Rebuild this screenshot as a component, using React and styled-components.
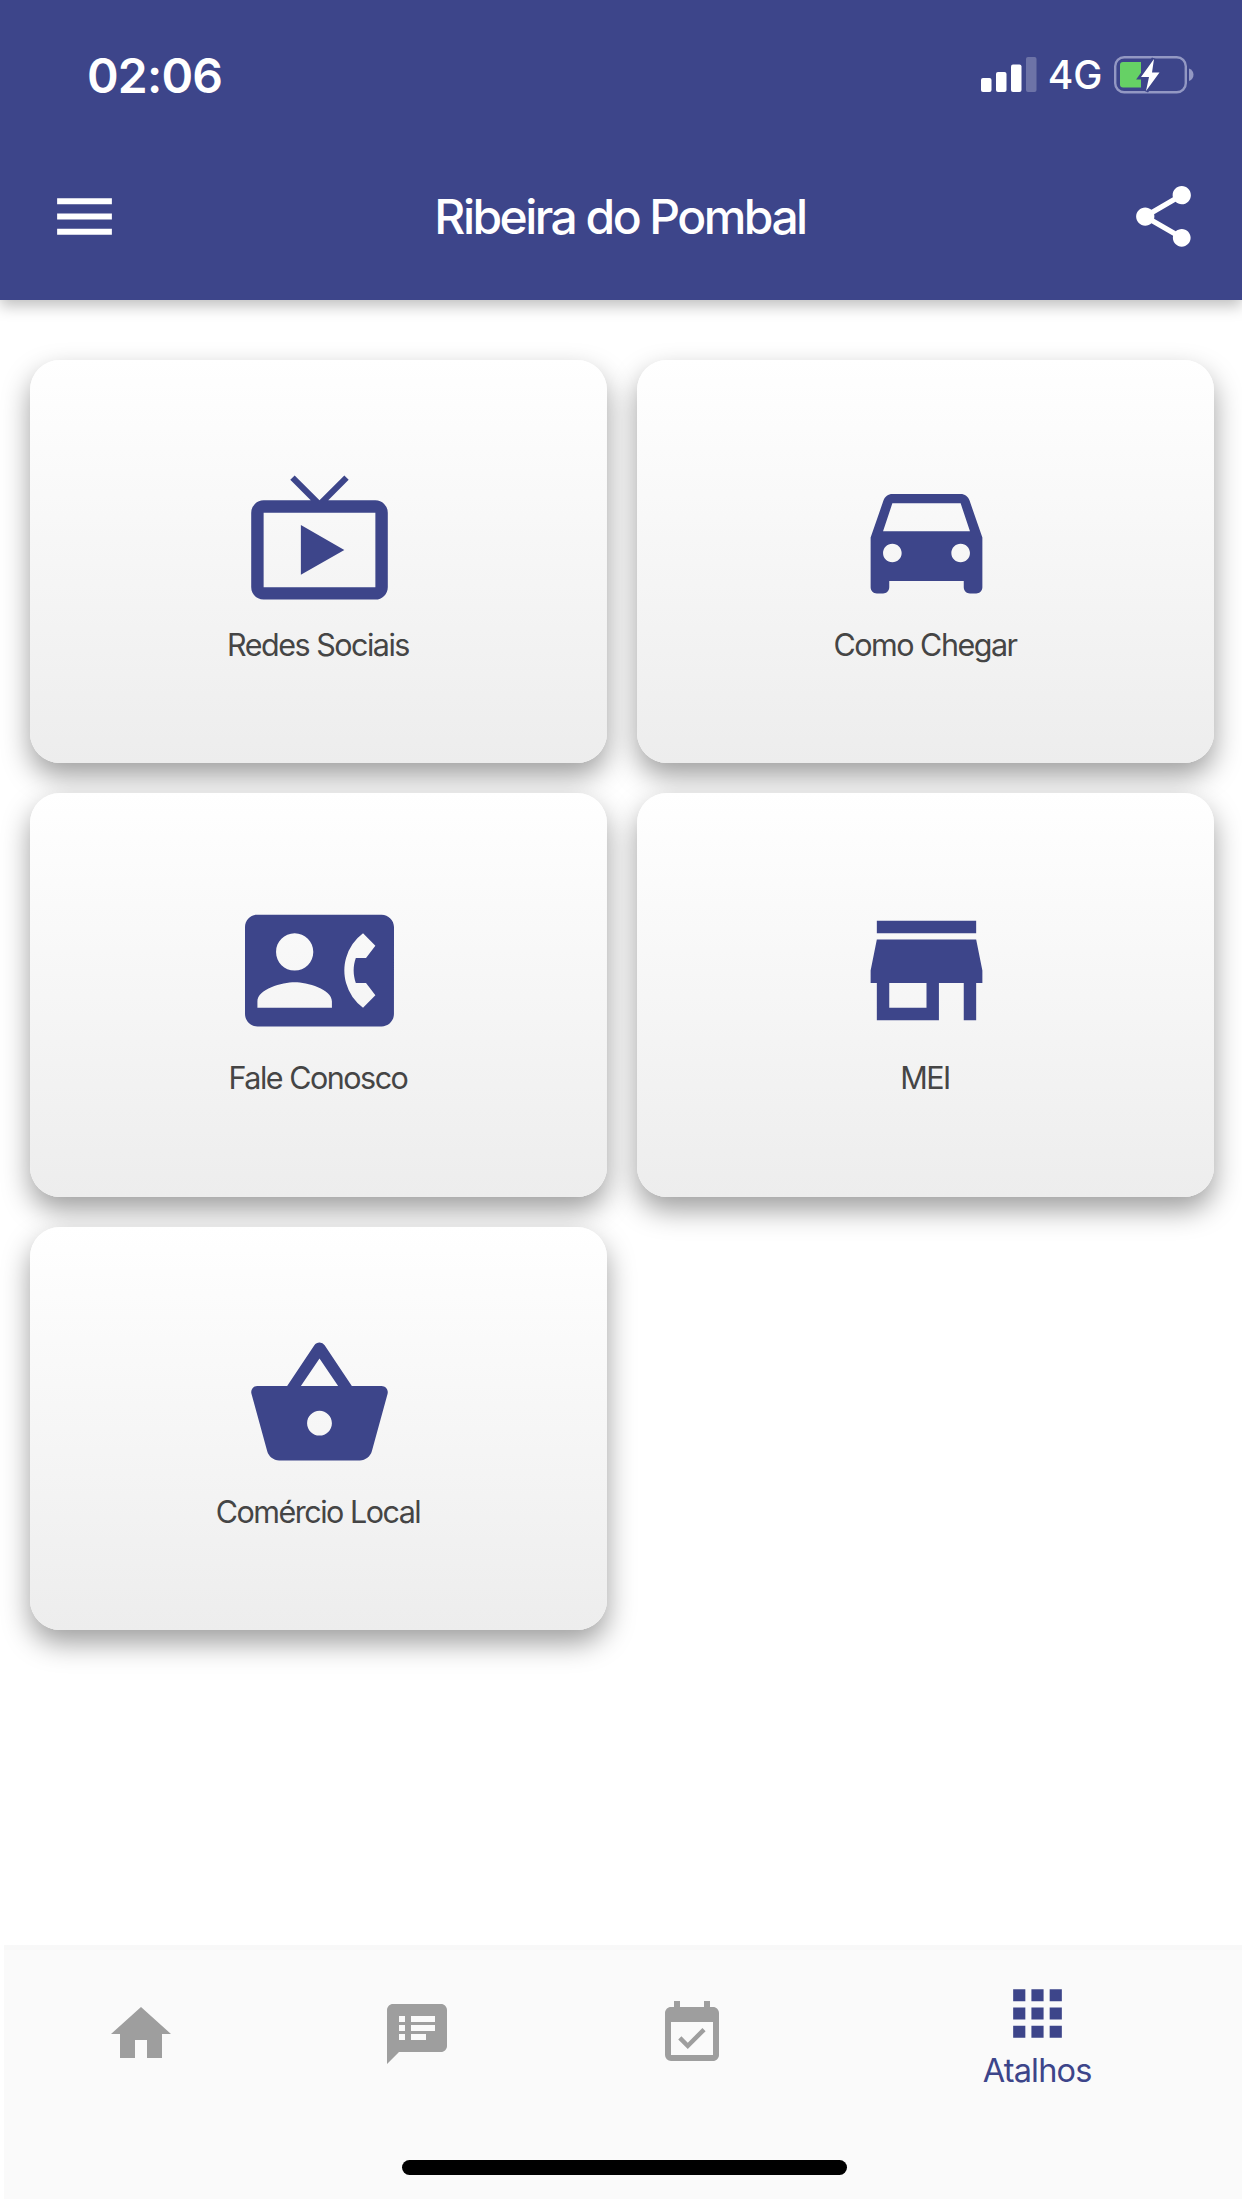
import React from 'react';
import styled, { createGlobalStyle } from 'styled-components';
import {
	MdApps,
	MdContactPhone,
	MdDirectionsCar,
	MdEventAvailable,
	MdHome,
	MdLiveTv,
	MdMenu,
	MdShare,
	MdShoppingBasket,
	MdSpeakerNotes,
	MdStore,
} from 'react-icons/md';

const GlobalStyle = createGlobalStyle`
	:root {
		--blue: #3d458a;
		--grey: #9e9e9e;
		--text: #454545;
	}
	* {
		box-sizing: border-box;
	}
	body {
		margin: 0;
		background: #fff;
		font-family: Inter, "Liberation Sans", sans-serif;
	}
	svg {
		display: block;
		flex: none;
	}
`;

const Screen = styled.div`
	display: flex;
	flex-direction: column;
	width: 1242px;
	height: 2208px;
	overflow: hidden;
	background: #fff;
`;

const Header = styled.header`
	height: 300px;
	flex: none;
	background: var(--blue);
	color: #fff;
	box-shadow: 0 6px 14px rgba(0,0,0,.25);
`;

const StatusBar = styled.div`
	display: flex;
	justify-content: space-between;
	align-items: center;
	height: 150px;
	padding: 0 48px 0 87px;
`;

const Clock = styled.span`
	font-size: 48px;
	font-weight: 600;
	letter-spacing: -.8px;
`;

const StatusIcons = styled.div`
	display: flex;
	align-items: center;
`;

const Network = styled.span`
	margin: 0 12px 0 11px;
	font-size: 39px;
	font-weight: 500;
	line-height: 40px;
	letter-spacing: -.3px;
`;

const TitleBar = styled.div`
	display: grid;
	grid-template-columns: 73px 1fr 73px;
	align-items: center;
	height: 132px;
	padding: 0 42px 0 48px;
`;

const Title = styled.h1`
	margin: 0;
	padding: 2px 8px 0 0;
	font-size: 48px;
	font-weight: 500;
	line-height: 60px;
	letter-spacing: -2.55px;
	text-align: center;
`;

const Grid = styled.main`
	flex: 1;
	display: grid;
	grid-template-columns: 577px 577px;
	grid-auto-rows: 403.4px;
	gap: 30px;
	align-content: start;
	padding: 60px 28px 0 30px;
`;

const CardStyled = styled.button`
	display: flex;
	flex-direction: column;
	align-items: center;
	padding: 103px 0 0;
	border: 0;
	border-radius: 30px;
	background: linear-gradient(#fff, #ededed);
	box-shadow: 0 13px 28px rgba(0,0,0,.38);
	color: var(--blue);
	font-family: inherit;
	svg {
		margin-left: 1px;
	}
`;

const CardLabel = styled.span`
	margin-top: 13px;
	padding-right: 1px;
	color: var(--text);
	font-size: 30.5px;
	line-height: 40px;
	letter-spacing: -1.5px;
`;

const BottomNav = styled.nav`
	display: flex;
	flex: none;
	height: 200px;
	margin-left: 4px;
	padding-right: 1px;
	background: #fafafa;
	border-top: 5px solid #f8f8f8;
`;

const Tab = styled.a`
	display: flex;
	flex-direction: column;
	align-items: center;
	width: ${({ $active }) => ($active ? '410px' : '276px')};
	padding-top: ${({ $active }) => ($active ? '27px' : '48px')};
	color: ${({ $active }) => ($active ? 'var(--blue)' : 'var(--grey)')};
	svg {
		margin-left: ${({ $active }) => ($active ? '2px' : '-2px')};
	}
`;

const TabLabel = styled.span`
	margin-top: 1px;
	padding-left: 2px;
	font-size: 32.5px;
	line-height: 40px;
	letter-spacing: -.8px;
`;

const HomeArea = styled.div`
	flex: none;
	height: 54px;
	margin: 0 0 9px 4px;
	padding: 15px 0 0 398px;
	background: #fafafa;
`;

const HomeIndicator = styled.div`
	width: 445px;
	height: 15px;
	border-radius: 8px;
	background: #000;
`;

const Signal = () => (
	<svg width="56" height="36" viewBox="0 0 56 36" fill="#fff">
		<rect x="0" y="21" width="10.5" height="14" rx="2" />
		<rect x="15" y="15" width="10.5" height="20" rx="2" />
		<rect x="30" y="7.5" width="10.5" height="27.5" rx="2" />
		<rect x="45" y="0" width="10.5" height="35" rx="2" opacity=".25" />
	</svg>
);

const Battery = () => (
	<svg width="80" height="38" viewBox="0 0 80 38">
		<rect x="1.2" y="1.2" width="70.6" height="35" rx="9" fill="none" stroke="#9398c3" strokeWidth="2.4" />
		<path d="M75 12.5c6 2 6 10.5 0 12.5z" fill="#9398c3" />
		<path d="M9 6h18v25.5H9a3 3 0 0 1-3-3V9a3 3 0 0 1 3-3z" fill="#66d165" />
		<path d="M40 3L27 21h8l-3 14L45.5 16.5H38z" fill="#fff" stroke="#3d458a" strokeWidth="5" paintOrder="stroke" />
	</svg>
);

const cards = [
	{ label: 'Redes Sociais', Icon: MdLiveTv },
	{ label: 'Como Chegar', Icon: MdDirectionsCar },
	{ label: 'Fale Conosco', Icon: MdContactPhone },
	{ label: 'MEI', Icon: MdStore },
	{ label: 'Comércio Local', Icon: MdShoppingBasket },
];

const Card = ({ label, Icon }) => (
	<CardStyled>
		<Icon size={149} />
		<CardLabel>{label}</CardLabel>
	</CardStyled>
);

const App = () => {
	return (
		<>
			<GlobalStyle />
			<Screen>
				<Header>
					<StatusBar>
						<Clock>02:06</Clock>
						<StatusIcons>
							<Signal />
							<Network>4G</Network>
							<Battery />
						</StatusIcons>
					</StatusBar>
					<TitleBar>
						<MdMenu size={73} />
						<Title>Ribeira do Pombal</Title>
						<MdShare size={73} />
					</TitleBar>
				</Header>
				<Grid>
					{cards.map((card) => <Card key={card.label} {...card} />)}
				</Grid>
				<BottomNav>
					<Tab><MdHome size={72} /></Tab>
					<Tab><MdSpeakerNotes size={72} /></Tab>
					<Tab><MdEventAvailable size={72} /></Tab>
					<Tab $active>
						<MdApps size={73} />
						<TabLabel>Atalhos</TabLabel>
					</Tab>
				</BottomNav>
				<HomeArea>
					<HomeIndicator />
				</HomeArea>
			</Screen>
		</>
	)
}

export default App
